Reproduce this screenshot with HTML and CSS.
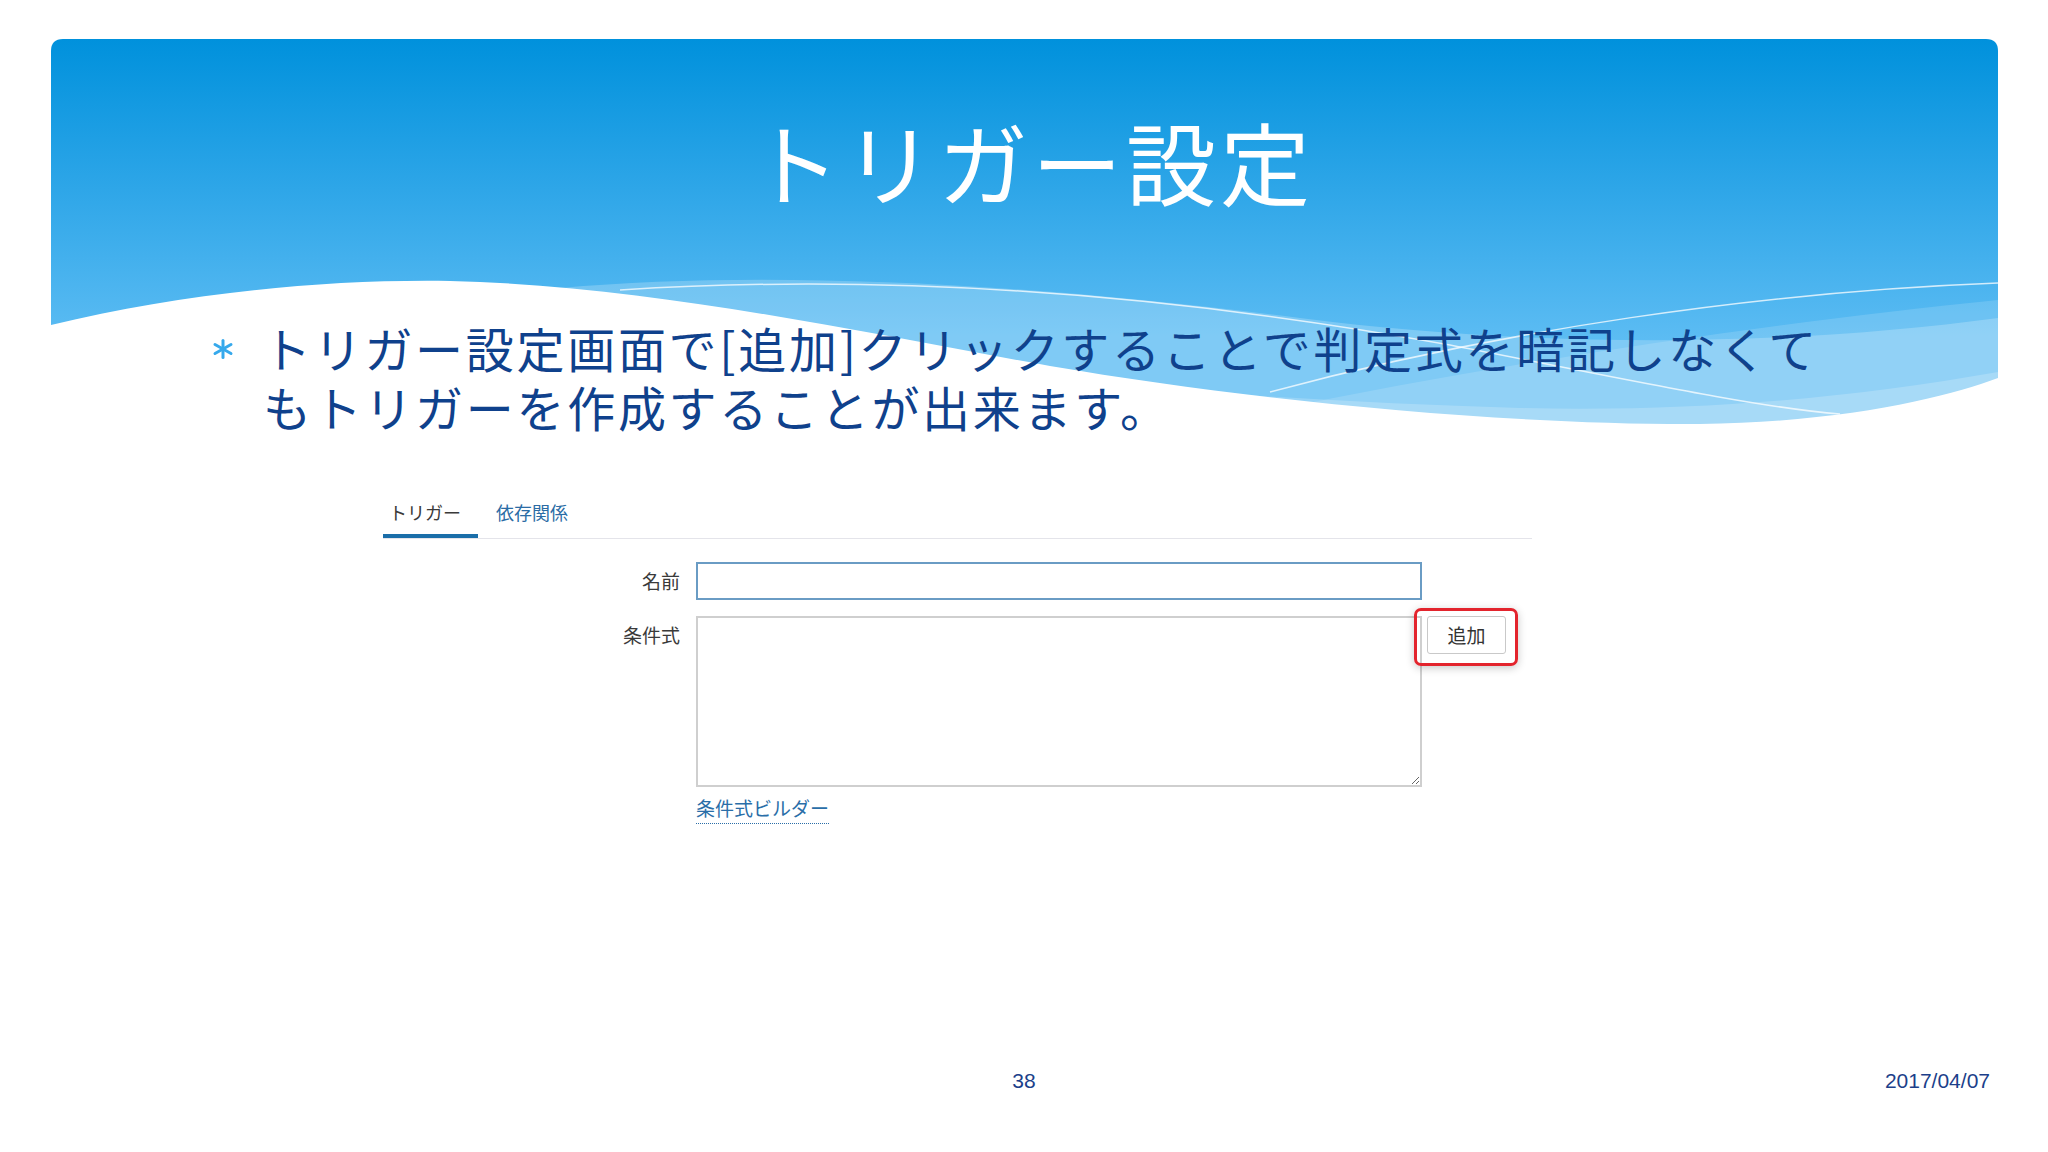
FILE: index.html
```html
<!DOCTYPE html>
<html lang="ja">
<head>
<meta charset="utf-8">
<title>トリガー設定</title>
<link rel="stylesheet" href="styles.css">
</head>
<body>
<div class="slide">
  <svg class="bg" width="2048" height="480" viewBox="0 0 2048 480" aria-hidden="true">
    <defs>
      <linearGradient id="sky" x1="0" y1="39" x2="0" y2="340" gradientUnits="userSpaceOnUse">
        <stop offset="0" stop-color="#0091dc"/>
        <stop offset="0.5" stop-color="#2ea6e8"/>
        <stop offset="1" stop-color="#5cbcf3"/>
      </linearGradient>
    </defs>
    <path d="M51 51 Q51 39 63 39 L1986 39 Q1998 39 1998 51 L1998 470 L51 470 Z" fill="url(#sky)"/>
    <path d="M560 288 C760 270 1020 282 1300 318 C1550 350 1800 345 1998 318 L1998 470 L560 470 Z" fill="#ffffff" fill-opacity="0.22"/>
    <path d="M1180 430 C1450 370 1750 325 1998 300 L1998 470 L1180 470 Z" fill="#ffffff" fill-opacity="0.14"/>
    <path d="M760 340 C1000 380 1250 400 1520 408 C1700 412 1850 398 1998 372 L1998 470 L760 470 Z" fill="#ffffff" fill-opacity="0.2"/>
    <path d="M620 290 C900 272 1180 296 1450 345 C1620 378 1760 408 1840 414" fill="none" stroke="#ffffff" stroke-opacity="0.75" stroke-width="1.5"/>
    <path d="M1270 392 C1500 330 1760 292 1998 283" fill="none" stroke="#ffffff" stroke-opacity="0.75" stroke-width="1.5"/>
    <path d="M51 325 C180 294 320 279 450 281 C650 286 850 330 1050 366 C1250 400 1500 425 1700 424 C1850 422 1950 396 1998 378 L1998 480 L51 480 Z" fill="#ffffff"/>
  </svg>

  <div class="content">
    <h1 class="title">トリガー設定</h1>

    <div class="bullet">
      <svg class="star" width="22" height="20" viewBox="0 0 22 20" aria-hidden="true">
        <g stroke="#36a9ec" stroke-width="3" stroke-linecap="round">
          <line x1="11" y1="1.5" x2="11" y2="18.5"/>
          <line x1="3" y1="5.5" x2="19" y2="14.5"/>
          <line x1="3" y1="14.5" x2="19" y2="5.5"/>
        </g>
      </svg>
      <p class="bullet-text">トリガー設定画面で[追加]クリックすることで判定式を暗記しなくて<br>もトリガーを作成することが出来ます。</p>
    </div>

    <div class="tabs">
      <div class="tab active">トリガー</div>
      <div class="tab">依存関係</div>
    </div>

    <div class="form">
      <div class="label label-mid">名前</div>
      <div class="input"></div>
      <div class="spacer"></div>

      <div class="label label-top">条件式</div>
      <textarea class="textarea" readonly></textarea>
      <div class="btn-cell">
        <div class="btn-wrap">
          <span class="btn">追加</span>
        </div>
      </div>

      <div class="spacer"></div>
      <div class="link-cell"><span class="link">条件式ビルダー</span></div>
      <div class="spacer"></div>
    </div>

    <div class="footer">
      <div></div>
      <div class="page">38</div>
      <div class="date">2017/04/07</div>
    </div>
  </div>
</div>
</body>
</html>
```

FILE: styles.css
```css
html, body {
  margin: 0;
  padding: 0;
  background: #ffffff;
}

.slide {
  position: relative;
  width: 2048px;
  height: 1152px;
  overflow: hidden;
  background: #ffffff;
  font-family: "Noto Sans CJK JP", "Noto Sans", sans-serif;
}

.bg {
  position: absolute;
  left: 0;
  top: 0;
}

.content {
  position: relative;
  display: flex;
  flex-direction: column;
  height: 100%;
}

.title {
  margin: 115px 0 0 0;
  padding-left: 16px;
  font-size: 90px;
  line-height: 90px;
  font-weight: 400;
  color: #ffffff;
  text-align: center;
  letter-spacing: 4px;
}

.bullet {
  display: flex;
  align-items: flex-start;
  margin-top: 113px;
  padding-left: 212px;
}

.star {
  margin-top: 21px;
  flex: none;
}

.bullet-text {
  margin: 0 0 0 29px;
  font-size: 48px;
  line-height: 59px;
  font-weight: 400;
  color: #0f418c;
  letter-spacing: 2.7px;
  white-space: nowrap;
}

.tabs {
  display: flex;
  gap: 17px;
  margin: 64px 0 0 383px;
  width: 1149px;
  border-bottom: 1px solid #e4e4ea;
}

.tab {
  font-size: 18px;
  line-height: 24px;
  padding: 0 12px 10px 6px;
  border-bottom: 4px solid transparent;
  color: #2b6ca5;
}

.tab.active {
  color: #3a3a3a;
  border-bottom-color: #1a6ea9;
  padding-right: 17px;
}

.tab + .tab {
  margin-left: -5px;
}

.form {
  display: grid;
  grid-template-columns: 297px 726px 120px;
  column-gap: 16px;
  row-gap: 16px;
  margin: 23px 0 0 383px;
  grid-template-rows: 38px 171px auto;
}

.label {
  font-size: 19px;
  line-height: 24px;
  color: #3a3a3a;
  text-align: right;
}

.label-mid {
  align-self: center;
}

.label-top {
  padding-top: 7px;
}

.input {
  box-sizing: border-box;
  height: 38px;
  border: 2px solid #6a9cc4;
  background: #ffffff;
}

.textarea {
  box-sizing: border-box;
  width: 726px;
  height: 171px;
  margin: 0;
  border: 2px solid #cfcfcf;
  background: #ffffff;
  resize: both;
  outline: none;
}

.btn-cell {
  margin-left: -11px;
}

.btn-wrap {
  position: relative;
  display: inline-block;
}

.btn-wrap::after {
  content: "";
  position: absolute;
  left: -13px;
  right: -12px;
  top: -8px;
  bottom: -12px;
  border: 3px solid #e3242d;
  border-radius: 7px;
  box-shadow: 0 2px 8px rgba(0, 0, 0, 0.22);
}

.btn {
  display: block;
  box-sizing: border-box;
  width: 79px;
  height: 38px;
  border: 1.5px solid #c9c9c9;
  border-radius: 3px;
  background: #ffffff;
  font-size: 19px;
  line-height: 35px;
  text-align: center;
  color: #333333;
}

.link-cell {
  margin-top: -7px;
}

.link {
  display: inline-block;
  font-size: 19px;
  line-height: 24px;
  padding-bottom: 3px;
  color: #2a6ea8;
  border-bottom: 1px dotted #2a6ea8;
}

.footer {
  margin-top: auto;
  display: grid;
  grid-template-columns: 1fr auto 1fr;
  padding: 0 58px 59px 58px;
  font-family: "Liberation Sans", Arial, sans-serif;
  font-size: 21px;
  line-height: 24px;
  color: #1c3f8a;
}

.page {
  text-align: center;
}

.date {
  text-align: right;
}
```
